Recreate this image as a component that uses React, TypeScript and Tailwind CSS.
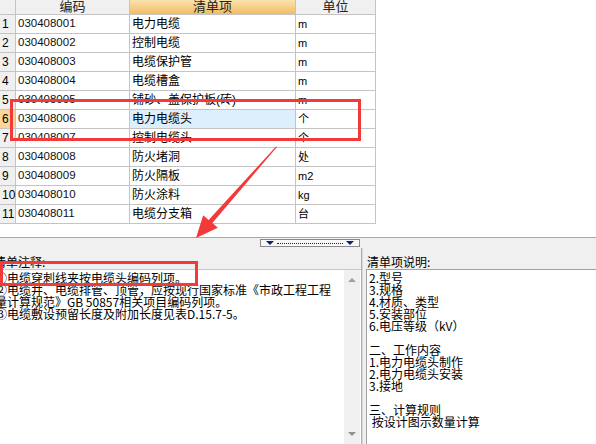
const rows: [string, string, string][] = [
  ["030408001", "电力电缆", "m"],
  ["030408002", "控制电缆", "m"],
  ["030408003", "电缆保护管", "m"],
  ["030408004", "电缆槽盒", "m"],
  ["030408005", "铺砂、盖保护板(砖)", "m"],
  ["030408006", "电力电缆头", "个"],
  ["030408007", "控制电缆头", "个"],
  ["030408008", "防火堵洞", "处"],
  ["030408009", "防火隔板", "m2"],
  ["030408010", "防火涂料", "kg"],
  ["030408011", "电缆分支箱", "台"],
];

const notes = [
  "①电缆穿刺线夹按电缆头编码列项。",
  "②电缆井、电缆排管、顶管，应按现行国家标准《市政工程工程",
  "量计算规范》GB 50857相关项目编码列项。",
  "③电缆敷设预留长度及附加长度见表D.15.7-5。",
];

const desc = [
  "2.型号",
  "3.规格",
  "4.材质、类型",
  "5.安装部位",
  "6.电压等级（kV）",
  "",
  "二、工作内容",
  "1.电力电缆头制作",
  "2.电力电缆头安装",
  "3.接地",
  "",
  "三、计算规则",
  " 按设计图示数量计算",
];

const cjk = { fontFamily: '"Liberation Sans", "Noto Sans CJK SC", sans-serif' };

const App = () => {
  return (
    <div className="relative w-[596px] h-[444px] overflow-hidden bg-white text-black" style={cjk}>
      {/* 清单表格 */}
      <div className="h-[237px] bg-white">
        <div className="grid grid-cols-[16px_114px_166px_80px] w-[376px] text-[12px]">
          <div className="h-[15px] bg-[#f0f0f0] border-r border-b border-[#c4c4c4]" />
          <div className="h-[15px] bg-[#f0f0f0] border-r border-b border-[#c4c4c4] flex items-end justify-center leading-[14px] text-[13px] text-[#222]">
            编码
          </div>
          <div className="h-[15px] bg-gradient-to-b from-[#fae2ad] to-[#f1bd62] border-r border-b border-[#c4c4c4] flex items-end justify-center leading-[14px] text-[13px] text-[#222]">
            清单项
          </div>
          <div className="h-[15px] bg-[#f0f0f0] border-r border-b border-[#c4c4c4] flex items-end justify-center leading-[14px] text-[13px] text-[#222]">
            单位
          </div>
          {rows.map((r, i) => {
            const sel = i === 5;
            return (
              <div key={r[0]} className="contents">
                <div
                  className={`h-[19px] border-r border-b border-[#c4c4c4] flex items-center pl-[2px] text-[12px] ${
                    sel ? "bg-[#fbd698]" : "bg-[#f0f0f0]"
                  }`}
                >
                  {i + 1}
                </div>
                <div className="h-[19px] border-r border-b border-[#c4c4c4] flex items-center pl-[2px] text-[11.5px] text-[#111]">
                  {r[0]}
                </div>
                <div
                  className={`h-[19px] border-r border-b border-[#c4c4c4] flex items-center pl-[2px] text-[12px] ${
                    sel ? "bg-[#ddeefd]" : ""
                  }`}
                >
                  {r[1]}
                </div>
                <div className="h-[19px] border-r border-b border-[#c4c4c4] flex items-center pl-[2px] text-[11px]">
                  {r[2]}
                </div>
              </div>
            );
          })}
        </div>
      </div>

      {/* 分隔条 */}
      <div className="h-[11px] border-t border-[#a8a8a8] bg-[#f0f0f0] pt-[1px]">
        <div className="ml-[260px] w-[100px] h-[8px] border border-[#8a8a8a] bg-[#f7f7f7] flex items-center px-[5px] gap-[3px]">
          <svg width="8" height="4" viewBox="0 0 8 4">
            <path d="M0 0H8L4 4Z" fill="#10207a" />
          </svg>
          <div className="flex-1 border-b border-dotted border-[#10207a] h-0" />
          <svg width="8" height="4" viewBox="0 0 8 4">
            <path d="M0 0H8L4 4Z" fill="#10207a" />
          </svg>
        </div>
      </div>

      {/* 下方面板 */}
      <div className="flex h-[196px] bg-[#f0f0f0]">
        <div className="w-[362px] flex flex-col border-r border-[#b0b0b0] overflow-hidden">
          <div className="h-[21px] pt-[8px] leading-[12px] text-[12px] -ml-[6px] whitespace-nowrap" style={{ fontFamily: '"Noto Sans CJK SC", sans-serif' }}>
            清单注释:
          </div>
          <div className="flex-1 flex bg-white border-t border-[#c8c8c8]">
            <div className="flex-1 pt-[2px] -ml-[5px] text-[12px] leading-[12px] whitespace-nowrap overflow-hidden" style={{ fontFamily: '"Noto Sans CJK SC", sans-serif' }}>
              {notes.map((n) => (
                <div key={n}>{n}</div>
              ))}
            </div>
            <div className="w-[16px] bg-[#f0f0f0] flex flex-col justify-between items-center py-[8px] mr-[1px]">
              <svg width="8" height="4" viewBox="0 0 8 4">
                <path d="M0 4H8L4 0Z" fill="#a0a0a0" />
              </svg>
              <svg width="8" height="4" viewBox="0 0 8 4">
                <path d="M0 0H8L4 4Z" fill="#909090" />
              </svg>
            </div>
          </div>
        </div>
        <div className="flex-1 flex flex-col pl-[3px] border-l border-[#d8d8d8]">
          <div className="h-[21px] pt-[8px] leading-[12px] text-[12px] pl-[1px]" style={{ fontFamily: '"Noto Sans CJK SC", sans-serif' }}>
            清单项说明:
          </div>
          <div className="flex-1 bg-white border-t border-l border-[#a0a0a0] pt-[2px] pl-[2px] text-[12px] leading-[12px] whitespace-pre" style={{ fontFamily: '"Noto Sans CJK SC", sans-serif' }}>
            {desc.map((d, i) => (
              <div key={i} className="h-[12px]">
                {d}
              </div>
            ))}
          </div>
        </div>
      </div>

      {/* 红色标注 */}
      <div className="absolute left-[10px] top-[99px] w-[351px] h-[42px] border-[3px] border-[#f23a3a]" />
      <div className="absolute left-0 top-[261px] w-[198px] h-[25px] border-[3px] border-[#f23a3a]" />
      <svg className="absolute left-0 top-0" width="596" height="444" viewBox="0 0 596 444">
        <polygon
          points="277,147 212.4,223.1 217.8,227.8 196,238 203.2,215.2 208.6,219.9 276,146.5"
          fill="#f23a3a"
        />
      </svg>
    </div>
  );
};

export default App;
